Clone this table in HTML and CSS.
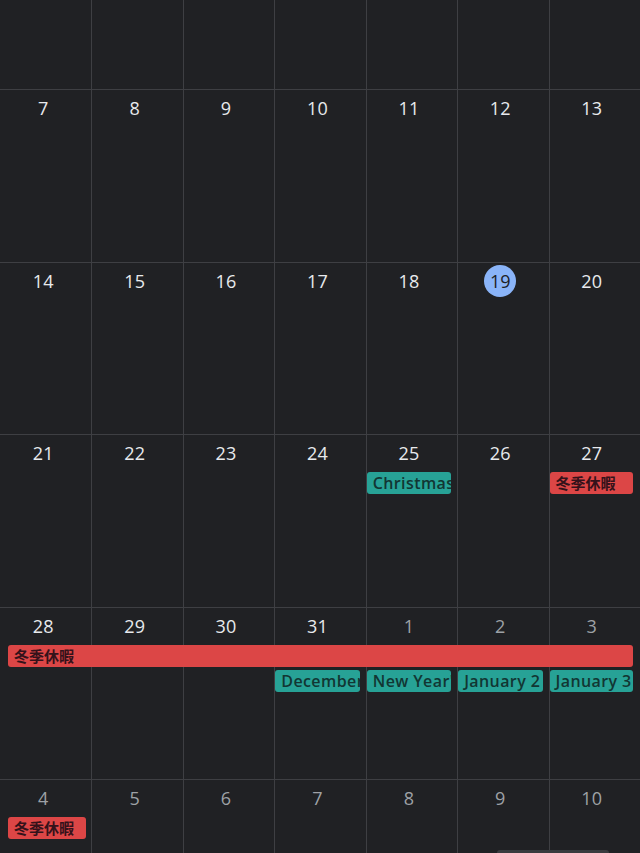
FILE: index.html
```html
<!DOCTYPE html>
<html lang="ja">
<head>
<meta charset="utf-8">
<title>Calendar</title>
<link rel="stylesheet" href="styles.css">
</head>
<body>
<div class="calendar">
  <div class="week partial-top">
    <div class="cell c1"></div><div class="cell c2"></div><div class="cell c3"></div><div class="cell c4"></div><div class="cell c5"></div><div class="cell c6"></div><div class="cell c7"></div>
  </div>
  <div class="week">
    <div class="cell c1"><span class="num">7</span></div>
    <div class="cell c2"><span class="num">8</span></div>
    <div class="cell c3"><span class="num">9</span></div>
    <div class="cell c4"><span class="num">10</span></div>
    <div class="cell c5"><span class="num">11</span></div>
    <div class="cell c6"><span class="num">12</span></div>
    <div class="cell c7"><span class="num">13</span></div>
  </div>
  <div class="week">
    <div class="cell c1"><span class="num">14</span></div>
    <div class="cell c2"><span class="num">15</span></div>
    <div class="cell c3"><span class="num">16</span></div>
    <div class="cell c4"><span class="num">17</span></div>
    <div class="cell c5"><span class="num">18</span></div>
    <div class="cell c6"><span class="num today">19</span></div>
    <div class="cell c7"><span class="num">20</span></div>
  </div>
  <div class="week">
    <div class="cell c1"><span class="num">21</span></div>
    <div class="cell c2"><span class="num">22</span></div>
    <div class="cell c3"><span class="num">23</span></div>
    <div class="cell c4"><span class="num">24</span></div>
    <div class="cell c5"><span class="num">25</span></div>
    <div class="cell c6"><span class="num">26</span></div>
    <div class="cell c7"><span class="num">27</span></div>
    <div class="ev teal s5">Christmas</div>
    <div class="ev red s7 cjk">冬季休暇</div>
  </div>
  <div class="week">
    <div class="cell c1"><span class="num">28</span></div>
    <div class="cell c2"><span class="num">29</span></div>
    <div class="cell c3"><span class="num">30</span></div>
    <div class="cell c4"><span class="num">31</span></div>
    <div class="cell c5"><span class="num dim">1</span></div>
    <div class="cell c6"><span class="num dim">2</span></div>
    <div class="cell c7"><span class="num dim">3</span></div>
    <div class="ev red full cjk">冬季休暇</div>
    <div class="ev teal s4 lane2">December 31</div>
    <div class="ev teal s5 lane2">New Year's Day</div>
    <div class="ev teal s6 lane2">January 2</div>
    <div class="ev teal s7 lane2">January 3</div>
  </div>
  <div class="week partial-bottom">
    <div class="cell c1"><span class="num dim">4</span></div>
    <div class="cell c2"><span class="num dim">5</span></div>
    <div class="cell c3"><span class="num dim">6</span></div>
    <div class="cell c4"><span class="num dim">7</span></div>
    <div class="cell c5"><span class="num dim">8</span></div>
    <div class="cell c6"><span class="num dim">9</span></div>
    <div class="cell c7"><span class="num dim">10</span></div>
    <div class="ev red s1 cjk">冬季休暇</div>
  </div>
</div>
<div class="home-indicator"></div>
</body>
</html>
```
FILE: styles.css
```css
html, body {
  margin: 0;
  padding: 0;
  height: 100%;
  background: #202124;
  overflow: hidden;
}

body {
  font-family: "Open Sans", Roboto, "Noto Sans CJK JP", sans-serif;
  color: #e8eaed;
}

.calendar {
  display: flex;
  flex-direction: column;
  height: 853px;
}

.week {
  display: grid;
  grid-template-columns: repeat(7, 1fr);
  grid-template-rows: 36px 23px 3px 23px 1fr;
  height: 172.5px;
  border-top: 1px solid #3e3f43;
  box-sizing: border-box;
  flex: none;
}

.week.partial-top {
  height: 89px;
  border-top: none;
}

.week.partial-bottom {
  flex: 1;
  height: auto;
  min-height: 0;
  overflow: hidden;
}

.cell {
  grid-row: 1 / 6;
  border-left: 1px solid #3e3f43;
  display: flex;
  flex-direction: column;
  align-items: center;
  padding-right: 6px;
  min-width: 0;
}

.c1 { grid-column: 1; border-left: none; padding-left: 1px; }
.c2 { grid-column: 2; }
.c3 { grid-column: 3; }
.c4 { grid-column: 4; }
.c5 { grid-column: 5; }
.c6 { grid-column: 6; }
.c7 { grid-column: 7; }

.num {
  font-size: 18px;
  line-height: 36px;
  height: 36px;
  letter-spacing: 0.2px;
  color: #e8eaed;
}

.num.dim {
  color: #9ea1a6;
}

.num.today {
  margin-top: 2px;
  width: 32px;
  height: 32px;
  line-height: 32px;
  border-radius: 50%;
  background: #8ab4f8;
  color: #202124;
  text-align: center;
  letter-spacing: 0;
}

.ev {
  grid-row: 2;
  height: 22px;
  line-height: 22px;
  margin: 1px 6px 0 1px;
  padding-left: 6px;
  border-radius: 3px;
  overflow: hidden;
  white-space: nowrap;
  font-size: 16px;
  font-weight: 600;
  letter-spacing: 0.4px;
  color: #123633;
  min-width: 0;
}

.ev.lane2 { grid-row: 4; margin-top: 0; }

.ev.teal { background: #27a296; }

.ev.red {
  background: #dc4646;
  color: #35121a;
}

.ev.cjk {
  font-family: "Noto Sans CJK JP", sans-serif;
  font-weight: 700;
  font-size: 15px;
  letter-spacing: 0;
}

.s1 { grid-column: 1; margin-left: 8px; margin-right: 5px; }
.s4 { grid-column: 4; }
.s5 { grid-column: 5; }
.s6 { grid-column: 6; }
.s7 { grid-column: 7; margin-right: 7px; }
.full { grid-column: 1 / 8; margin-left: 8px; margin-right: 7px; }

.home-indicator {
  position: fixed;
  left: 497px;
  bottom: -3px;
  width: 112px;
  height: 6px;
  border-radius: 3px;
  background: #3a3b3f;
}
```
